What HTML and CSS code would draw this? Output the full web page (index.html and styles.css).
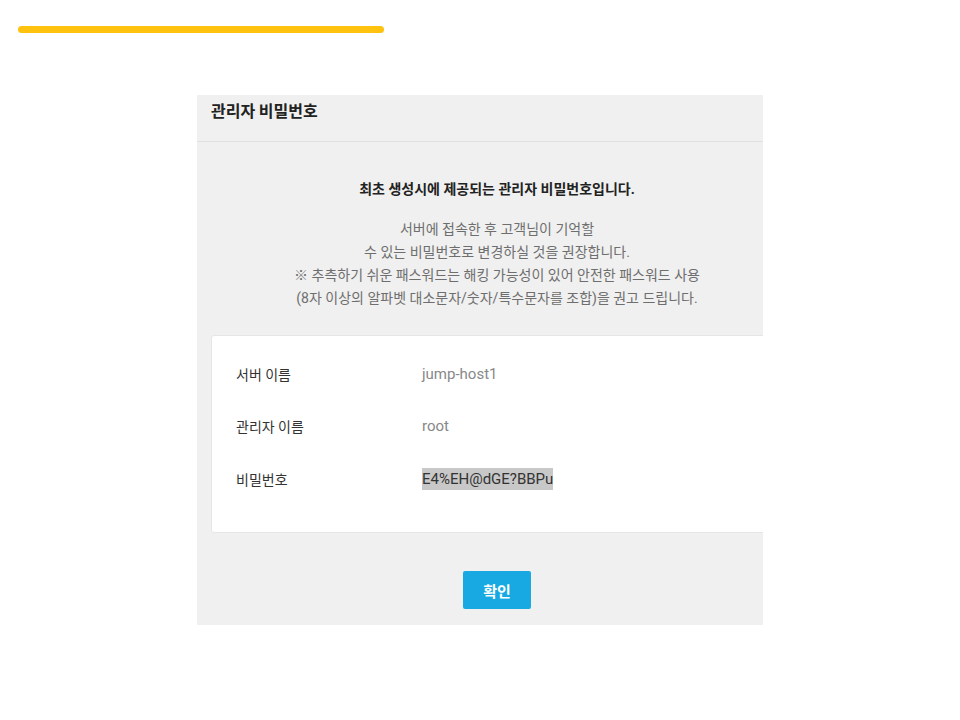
FILE: index.html
```html
<!DOCTYPE html>
<html>
<head>
    <meta charset="utf-8">
    <link rel="stylesheet" href="styles.css">
</head>
<body>
    <div class="top-bar"></div>
    <div class="modal">
      <div class="modal-inner">
        <div class="modal-header"><h3>관리자 비밀번호</h3></div>
        <div class="modal-body">
          <p class="lead">최초 생성시에 제공되는 관리자 비밀번호입니다.</p>
          <p class="desc">
            서버에 접속한 후 고객님이 기억할<br>
            수 있는 비밀번호로 변경하실 것을 권장합니다.<br>
            ※ 추측하기 쉬운 패스워드는 해킹 가능성이 있어 안전한 패스워드 사용<br>
            (8자 이상의 알파벳 대소문자/숫자/특수문자를 조합)을 권고 드립니다.
          </p>
          <div class="info">
            <div class="row">
              <div class="label">서버 이름</div>
              <div class="value">jump-host1</div>
            </div>
            <div class="row">
              <div class="label">관리자 이름</div>
              <div class="value">root</div>
            </div>
            <div class="row">
              <div class="label">비밀번호</div>
              <div class="value"><span class="pw">E4%EH@dGE?BBPu</span></div>
            </div>
          </div>
          <div class="actions">
            <button class="btn-ok">확인</button>
          </div>
        </div>
      </div>
    </div>
</body>
</html>
```

FILE: styles.css
```css
* {
margin: 0;
padding: 0;
box-sizing: border-box;
font-family: Roboto, "Noto Sans CJK KR", sans-serif;
}

body {
background-color: #ffffff;
}

.top-bar {
width: 366px;
height: 7px;
margin: 26px 0 0 18px;
background-color: #ffc20e;
border-radius: 4px;
}

.modal {
width: 566px;
margin: 62px 0 0 197px;
background-color: #f0f0f0;
overflow: hidden;
}

.modal-inner {
width: 600px;
}

.modal-header {
height: 47px;
padding: 3px 14px 0;
border-bottom: 1px solid #e1e1e1;
}

.modal-header h3 {
font-family: "Noto Sans CJK KR", sans-serif;
font-size: 16px;
line-height: 24px;
font-weight: bold;
color: #222222;
}

.modal-body {
padding: 37px 0 16px;
text-align: center;
}

.lead {
font-size: 14px;
line-height: 20px;
font-weight: bold;
color: #222222;
}

.desc {
margin-top: 19px;
font-size: 14px;
line-height: 23px;
color: #6e6e6e;
}

.info {
margin: 25px 14px 0;
height: 198px;
padding: 12px 24px 0;
background-color: #ffffff;
border: 1px solid #e6e6e6;
border-radius: 3px;
text-align: left;
}

.row {
display: flex;
align-items: center;
height: 52px;
font-size: 14px;
}

.row:last-child {
height: 54px;
}

.label {
width: 186px;
color: #333333;
}

.value {
color: #888888;
font-size: 15px;
}

.pw {
background-color: #c8c8c8;
color: #333333;
padding: 2px 0;
}

.actions {
margin-top: 38px;
}

.btn-ok {
width: 68px;
height: 38px;
border: none;
border-radius: 2px;
background-color: #18a9e3;
color: #ffffff;
font-size: 15px;
font-weight: bold;
cursor: pointer;
}
```
